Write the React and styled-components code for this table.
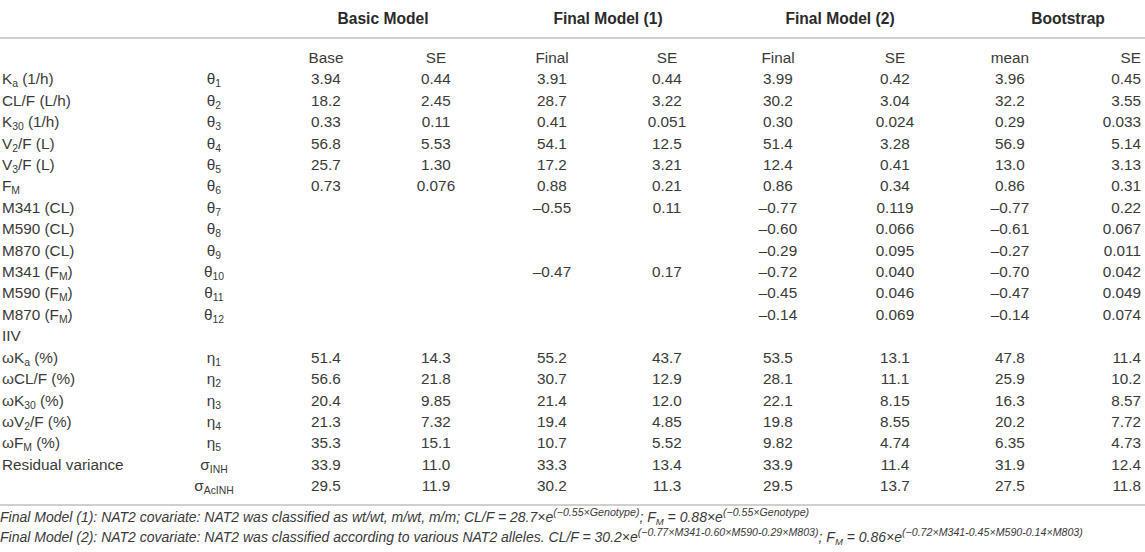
import React from "react";
import styled, { createGlobalStyle } from "styled-components";

const GlobalStyle = createGlobalStyle`
    html, body {
        margin: 0;
        padding: 0;
        background: #ffffff;
    }
    body {
        font-family: "Liberation Sans", Arial, Helvetica, sans-serif;
        color: #3a3a3a;
        overflow: hidden;
    }
`

const Wrap = styled.div`
    width: 1145px;
`

const Table = styled.table`
    width: 1145px;
    table-layout: fixed;
    border-collapse: separate;
    border-spacing: 0;
    font-size: 15.3px;
`

const GroupHead = styled.th`
    height: 37px;
    padding: 0 0 0 ${p => p.$shift || 0}px;
    font-size: 15.6px;
    font-weight: 700;
    color: #2a2a2a;
    text-align: center;
    vertical-align: middle;
    border-bottom: 2px solid #cfcfcf;
`

const Cell = styled.td`
    padding: ${p => (p.$first ? "8px" : "0")} ${p => (p.$last ? "4px" : "0")} ${p => (p.$end ? "7px" : "0")} ${p => (p.$label ? "2px" : "0")};
    line-height: 21.4px;
    height: 21.4px;
    text-align: ${p => (p.$label ? "left" : p.$last ? "right" : "center")};
    white-space: nowrap;
    font-weight: 400;
`

const Sub = styled.sub`
    font-size: 0.68em;
    line-height: 0;
    vertical-align: -0.3em;
`

const Note = styled.div`
    border-top: 2px solid #cfcfcf;
    padding-top: 1px;
    font-size: 14px;
    font-style: italic;
    color: #3a3a3a;
`

const NoteLine = styled.div`
    line-height: 20px;
    white-space: nowrap;
`

const Sup = styled.sup`
    font-size: 0.76em;
    line-height: 0;
    vertical-align: 0.55em;
`

const widths = [155, 118, 106, 114, 118, 112, 110, 124, 106, 82];

const rows = [
    [<>K<Sub>a</Sub> (1/h)</>, <>θ<Sub>1</Sub></>, "3.94", "0.44", "3.91", "0.44", "3.99", "0.42", "3.96", "0.45"],
    ["CL/F (L/h)", <>θ<Sub>2</Sub></>, "18.2", "2.45", "28.7", "3.22", "30.2", "3.04", "32.2", "3.55"],
    [<>K<Sub>30</Sub> (1/h)</>, <>θ<Sub>3</Sub></>, "0.33", "0.11", "0.41", "0.051", "0.30", "0.024", "0.29", "0.033"],
    [<>V<Sub>2</Sub>/F (L)</>, <>θ<Sub>4</Sub></>, "56.8", "5.53", "54.1", "12.5", "51.4", "3.28", "56.9", "5.14"],
    [<>V<Sub>3</Sub>/F (L)</>, <>θ<Sub>5</Sub></>, "25.7", "1.30", "17.2", "3.21", "12.4", "0.41", "13.0", "3.13"],
    [<>F<Sub>M</Sub></>, <>θ<Sub>6</Sub></>, "0.73", "0.076", "0.88", "0.21", "0.86", "0.34", "0.86", "0.31"],
    ["M341 (CL)", <>θ<Sub>7</Sub></>, "", "", "–0.55", "0.11", "–0.77", "0.119", "–0.77", "0.22"],
    ["M590 (CL)", <>θ<Sub>8</Sub></>, "", "", "", "", "–0.60", "0.066", "–0.61", "0.067"],
    ["M870 (CL)", <>θ<Sub>9</Sub></>, "", "", "", "", "–0.29", "0.095", "–0.27", "0.011"],
    [<>M341 (F<Sub>M</Sub>)</>, <>θ<Sub>10</Sub></>, "", "", "–0.47", "0.17", "–0.72", "0.040", "–0.70", "0.042"],
    [<>M590 (F<Sub>M</Sub>)</>, <>θ<Sub>11</Sub></>, "", "", "", "", "–0.45", "0.046", "–0.47", "0.049"],
    [<>M870 (F<Sub>M</Sub>)</>, <>θ<Sub>12</Sub></>, "", "", "", "", "–0.14", "0.069", "–0.14", "0.074"],
    ["IIV", "", "", "", "", "", "", "", "", ""],
    [<>ωK<Sub>a</Sub> (%)</>, <>η<Sub>1</Sub></>, "51.4", "14.3", "55.2", "43.7", "53.5", "13.1", "47.8", "11.4"],
    ["ωCL/F (%)", <>η<Sub>2</Sub></>, "56.6", "21.8", "30.7", "12.9", "28.1", "11.1", "25.9", "10.2"],
    [<>ωK<Sub>30</Sub> (%)</>, <>η<Sub>3</Sub></>, "20.4", "9.85", "21.4", "12.0", "22.1", "8.15", "16.3", "8.57"],
    [<>ωV<Sub>2</Sub>/F (%)</>, <>η<Sub>4</Sub></>, "21.3", "7.32", "19.4", "4.85", "19.8", "8.55", "20.2", "7.72"],
    [<>ωF<Sub>M</Sub> (%)</>, <>η<Sub>5</Sub></>, "35.3", "15.1", "10.7", "5.52", "9.82", "4.74", "6.35", "4.73"],
    ["Residual variance", <>σ<Sub>INH</Sub></>, "33.9", "11.0", "33.3", "13.4", "33.9", "11.4", "31.9", "12.4"],
    ["", <>σ<Sub>AcINH</Sub></>, "29.5", "11.9", "30.2", "11.3", "29.5", "13.7", "27.5", "11.8"],
];

const subHeads = ["", "", "Base", "SE", "Final", "SE", "Final", "SE", "mean", "SE"];

function App() {
    return (
        <>
            <GlobalStyle />
            <Wrap>
                <Table>
                    <colgroup>
                        {widths.map((w, i) => <col key={i} style={{ width: w }} />)}
                    </colgroup>
                    <thead>
                        <tr>
                            <GroupHead />
                            <GroupHead />
                            <GroupHead colSpan={2}>Basic Model</GroupHead>
                            <GroupHead colSpan={2}>Final Model (1)</GroupHead>
                            <GroupHead colSpan={2}>Final Model (2)</GroupHead>
                            <GroupHead colSpan={2} $shift={34}>Bootstrap</GroupHead>
                        </tr>
                    </thead>
                    <tbody>
                        <tr>
                            {subHeads.map((t, i) => (
                                <Cell key={i} $first $label={i === 0} $last={i === 9}>{t}</Cell>
                            ))}
                        </tr>
                        {rows.map((r, ri) => (
                            <tr key={ri}>
                                {r.map((c, ci) => (
                                    <Cell
                                        key={ci}
                                        $label={ci === 0}
                                        $last={ci === 9}
                                        $end={ri === rows.length - 1}
                                    >
                                        {c}
                                    </Cell>
                                ))}
                            </tr>
                        ))}
                    </tbody>
                </Table>
                <Note>
                    <NoteLine>
                        Final Model (1): NAT2 covariate: NAT2 was classified as wt/wt, m/wt, m/m; CL/F = 28.7×e<Sup>(−0.55×Genotype)</Sup>; F<Sub>M</Sub> = 0.88×e<Sup>(−0.55×Genotype)</Sup>
                    </NoteLine>
                    <NoteLine>
                        Final Model (2): NAT2 covariate: NAT2 was classified according to various NAT2 alleles. CL/F = 30.2×e<Sup>(−0.77×M341-0.60×M590-0.29×M803)</Sup>; F<Sub>M</Sub> = 0.86×e<Sup>(−0.72×M341-0.45×M590-0.14×M803)</Sup>
                    </NoteLine>
                </Note>
            </Wrap>
        </>
    );
}

export default App;
